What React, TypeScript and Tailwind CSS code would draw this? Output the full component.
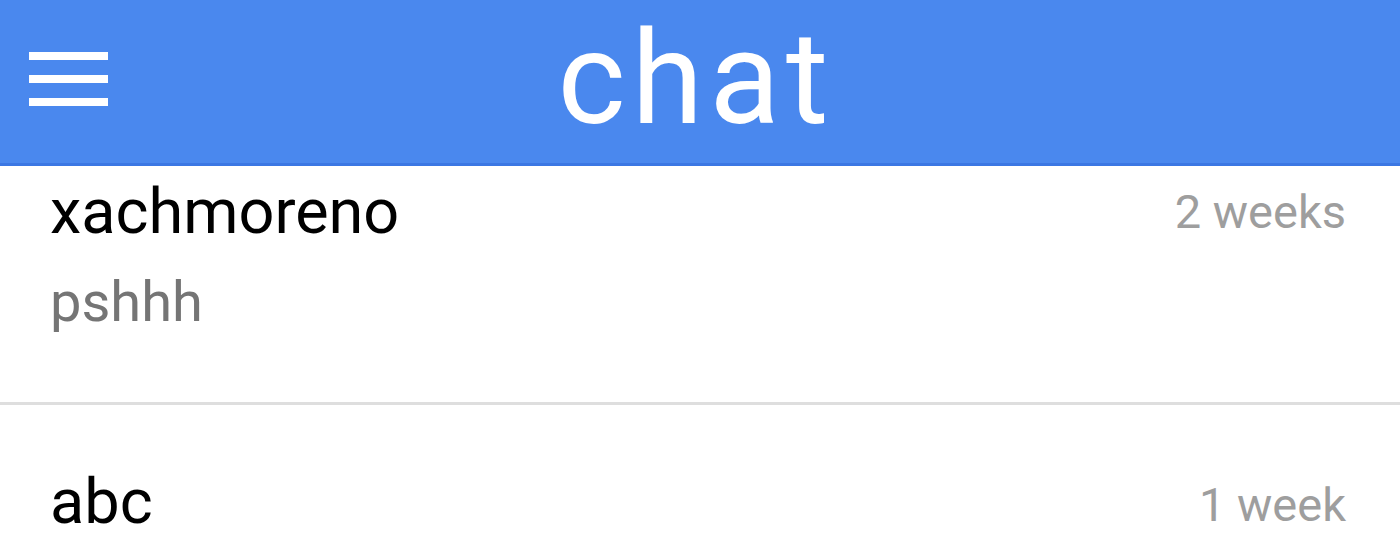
import React from "react";

const font = { fontFamily: "Roboto, 'Noto Sans', sans-serif" };

export default function App() {
  return (
    <div className="w-[1400px] h-[560px] overflow-hidden bg-white" style={font}>
      <header className="relative h-[166px] bg-[#4a88ee] border-b-[3px] border-[#3b77e3] flex items-center justify-center">
        <div className="absolute left-[29px] top-[52px] flex flex-col gap-[15px]">
          <div className="w-[79px] h-[8px] bg-white" />
          <div className="w-[79px] h-[8px] bg-white" />
          <div className="w-[79px] h-[8px] bg-white" />
        </div>
        <h1 className="text-white text-[130px] leading-[130px] tracking-[6px] font-normal mt-[-6px] ml-[-8px]">chat</h1>
      </header>
      <div className="pl-[50px] pr-[54px] pt-[10px] h-[236px]">
        <div className="flex justify-between items-start">
          <div className="text-black text-[63px] leading-[72px]">xachmoreno</div>
          <div className="text-[#9e9e9e] text-[47px] leading-[56px] mt-[8px]">2 weeks</div>
        </div>
        <div className="text-[#757575] text-[56px] leading-[70px] mt-[19px]">pshhh</div>
      </div>
      <div className="h-[3px] bg-[#dedede]" />
      <div className="pl-[50px] pr-[54px] pt-[61px]">
        <div className="flex justify-between items-start">
          <div className="text-black text-[63px] leading-[72px]">abc</div>
          <div className="text-[#9e9e9e] text-[47px] leading-[56px] mt-[11px]">1 week</div>
        </div>
      </div>
    </div>
  );
}
